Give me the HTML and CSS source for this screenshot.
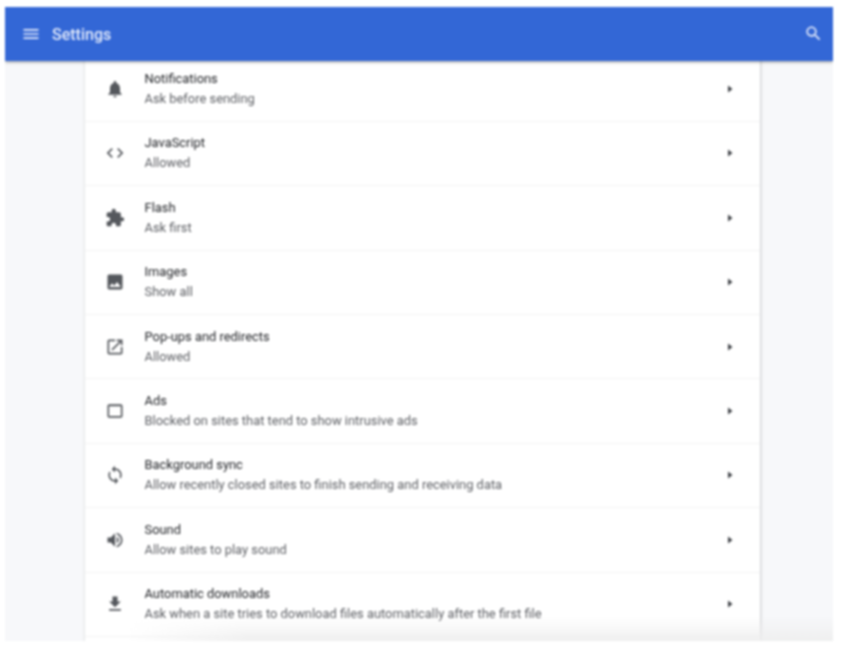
FILE: index.html
```html
<!DOCTYPE html>
<html lang="en">
<head>
    <meta charset="UTF-8">
    <meta name="viewport" content="width=device-width, initial-scale=1.0">
    <title>Settings</title>
    <link rel="stylesheet" href="styles.css">
</head>
<body>
    <div class="window">
        <header class="toolbar">
            <svg class="toolbar-icon" viewBox="0 0 24 24"><path d="M3 18h18v-2H3v2zm0-5h18v-2H3v2zm0-7v2h18V6H3z"/></svg>
            <span class="toolbar-title">Settings</span>
            <svg class="toolbar-icon search" viewBox="0 0 24 24"><path d="M15.5 14h-.79l-.28-.27C15.41 12.59 16 11.11 16 9.5 16 5.91 13.09 3 9.5 3S3 5.91 3 9.5 5.91 16 9.5 16c1.61 0 3.09-.59 4.23-1.57l.27.28v.79l5 4.99L20.49 19l-4.99-5zm-6 0C7.01 14 5 11.99 5 9.5S7.01 5 9.5 5 14 7.01 14 9.5 11.99 14 9.5 14z"/></svg>
        </header>

        <main class="card">
            <div class="row">
                <svg class="row-icon" viewBox="0 0 24 24"><path d="M12 22c1.1 0 2-.9 2-2h-4c0 1.1.89 2 2 2zm6-6v-5c0-3.07-1.64-5.64-4.5-6.32V4c0-.83-.67-1.5-1.5-1.5s-1.5.67-1.5 1.5v.68C7.63 5.36 6 7.92 6 11v5l-2 2v1h16v-1l-2-2z"/></svg>
                <div class="row-text"><div class="row-title">Notifications</div><div class="row-sub">Ask before sending</div></div>
                <svg class="row-arrow" viewBox="0 0 24 24"><path d="M8 5l9 7-9 7z"/></svg>
            </div>
            <div class="row">
                <svg class="row-icon" viewBox="0 0 24 24"><path d="M9.4 16.6L4.8 12l4.6-4.6L8 6l-6 6 6 6 1.4-1.4zm5.2 0l4.6-4.6-4.6-4.6L16 6l6 6-6 6-1.4-1.4z"/></svg>
                <div class="row-text"><div class="row-title">JavaScript</div><div class="row-sub">Allowed</div></div>
                <svg class="row-arrow" viewBox="0 0 24 24"><path d="M8 5l9 7-9 7z"/></svg>
            </div>
            <div class="row">
                <svg class="row-icon" viewBox="0 0 24 24"><path d="M20.5 11H19V7c0-1.1-.9-2-2-2h-4V3.5C13 2.12 11.88 1 10.5 1S8 2.12 8 3.5V5H4c-1.1 0-1.99.9-1.99 2v3.8H3.5c1.49 0 2.7 1.21 2.7 2.7s-1.21 2.7-2.7 2.7H2V20c0 1.1.9 2 2 2h3.8v-1.5c0-1.49 1.21-2.7 2.7-2.7 1.49 0 2.7 1.21 2.7 2.7V22H17c1.1 0 2-.9 2-2v-4h1.5c1.38 0 2.5-1.12 2.5-2.5S21.88 11 20.5 11z"/></svg>
                <div class="row-text"><div class="row-title">Flash</div><div class="row-sub">Ask first</div></div>
                <svg class="row-arrow" viewBox="0 0 24 24"><path d="M8 5l9 7-9 7z"/></svg>
            </div>
            <div class="row">
                <svg class="row-icon" viewBox="0 0 24 24"><path d="M21 19V5c0-1.1-.9-2-2-2H5c-1.1 0-2 .9-2 2v14c0 1.1.9 2 2 2h14c1.1 0 2-.9 2-2zM8.5 13.5l2.5 3.01L14.5 12l4.5 6H5l3.5-4.5z"/></svg>
                <div class="row-text"><div class="row-title">Images</div><div class="row-sub">Show all</div></div>
                <svg class="row-arrow" viewBox="0 0 24 24"><path d="M8 5l9 7-9 7z"/></svg>
            </div>
            <div class="row">
                <svg class="row-icon" viewBox="0 0 24 24"><path d="M19 19H5V5h7V3H5c-1.11 0-2 .9-2 2v14c0 1.1.89 2 2 2h14c1.1 0 2-.9 2-2v-7h-2v7zM14 3v2h3.59l-9.83 9.83 1.41 1.41L19 6.41V10h2V3h-7z"/></svg>
                <div class="row-text"><div class="row-title">Pop-ups and redirects</div><div class="row-sub">Allowed</div></div>
                <svg class="row-arrow" viewBox="0 0 24 24"><path d="M8 5l9 7-9 7z"/></svg>
            </div>
            <div class="row">
                <svg class="row-icon" viewBox="0 0 24 24"><path d="M19 4H5c-1.11 0-2 .9-2 2v12c0 1.1.89 2 2 2h14c1.1 0 2-.9 2-2V6c0-1.1-.89-2-2-2zm0 14H5V6.2h14V18z"/></svg>
                <div class="row-text"><div class="row-title">Ads</div><div class="row-sub">Blocked on sites that tend to show intrusive ads</div></div>
                <svg class="row-arrow" viewBox="0 0 24 24"><path d="M8 5l9 7-9 7z"/></svg>
            </div>
            <div class="row">
                <svg class="row-icon" viewBox="0 0 24 24"><path d="M12 4V1L8 5l4 4V6c3.31 0 6 2.69 6 6 0 1.01-.25 1.97-.7 2.8l1.46 1.46C19.54 15.03 20 13.57 20 12c0-4.42-3.58-8-8-8zm0 14c-3.31 0-6-2.69-6-6 0-1.01.25-1.97.7-2.8L5.24 7.74C4.46 8.97 4 10.43 4 12c0 4.42 3.58 8 8 8v3l4-4-4-4v3z"/></svg>
                <div class="row-text"><div class="row-title">Background sync</div><div class="row-sub">Allow recently closed sites to finish sending and receiving data</div></div>
                <svg class="row-arrow" viewBox="0 0 24 24"><path d="M8 5l9 7-9 7z"/></svg>
            </div>
            <div class="row">
                <svg class="row-icon" viewBox="0 0 24 24"><path d="M3 9v6h4l5 5V4L7 9H3zm13.5 3c0-1.77-1.02-3.29-2.5-4.03v8.05c1.48-.73 2.5-2.25 2.5-4.02zM14 3.23v2.06c2.89.86 5 3.54 5 6.71s-2.11 5.85-5 6.71v2.06c4.01-.91 7-4.49 7-8.77s-2.99-7.86-7-8.77z"/></svg>
                <div class="row-text"><div class="row-title">Sound</div><div class="row-sub">Allow sites to play sound</div></div>
                <svg class="row-arrow" viewBox="0 0 24 24"><path d="M8 5l9 7-9 7z"/></svg>
            </div>
            <div class="row">
                <svg class="row-icon" viewBox="0 0 24 24"><path d="M19 9h-4V3H9v6H5l7 7 7-7zM5 18v2h14v-2H5z"/></svg>
                <div class="row-text"><div class="row-title">Automatic downloads</div><div class="row-sub">Ask when a site tries to download files automatically after the first file</div></div>
                <svg class="row-arrow" viewBox="0 0 24 24"><path d="M8 5l9 7-9 7z"/></svg>
            </div>
        </main>

        <div class="bottom-fade"></div>
    </div>
</body>
</html>
```

FILE: styles.css
```css
html, body {
    margin: 0;
    padding: 0;
    background-color: #fff;
}
body {
    font-family: Roboto, "Liberation Sans", sans-serif;
    overflow: hidden;
    height: 648px;
}
.window {
    position: relative;
    margin: 7px 8px 0 5px;
    height: 634px;
    overflow: hidden;
    background-color: #f7f8fa;
    filter: blur(0.8px);
}
.toolbar {
    position: relative;
    z-index: 2;
    display: flex;
    align-items: center;
    height: 54px;
    padding: 0 10px 0 16px;
    background-color: #3367d6;
    box-shadow: 0 1px 3px rgba(0, 0, 0, 0.4);
    color: #e4ebfb;
}
.toolbar-icon {
    width: 20px;
    height: 20px;
    fill: #e6ecfb;
}
.toolbar-title {
    margin-left: 11px;
    font-size: 16px;
    font-weight: 500;
}
.search {
    width: 19px;
    height: 19px;
    margin-left: auto;
    margin-top: -2px;
}
.card {
    margin: -3.6px 72px 0 80px;
    padding-bottom: 20px;
    background-color: #fff;
    border-right: 1.5px solid #d5d6d9;
    box-shadow: 0 0 3px rgba(0, 0, 0, 0.15);
}
.row {
    display: flex;
    align-items: center;
    box-sizing: border-box;
    height: 64.4px;
    padding: 0 20px;
    border-bottom: 1px solid #f4f4f4;
}
.row-icon {
    flex: none;
    width: 20px;
    height: 20px;
    fill: #55585d;
}
.row-text {
    flex: 1;
    margin-left: 19.5px;
}
.row-title {
    font-size: 12.9px;
    line-height: 20px;
    color: #222428;
}
.row-sub {
    font-size: 12.9px;
    line-height: 20px;
    color: #5e6065;
}
.row-arrow {
    flex: none;
    width: 12px;
    height: 12px;
    margin-right: 4px;
    fill: #3f4247;
}
/* grey fade over the last row */
.bottom-fade {
    position: absolute;
    left: 120px;
    right: 0;
    bottom: 0;
    height: 24px;
    background: linear-gradient(to bottom, rgba(238, 238, 238, 0), rgba(238, 238, 238, 0.9));
    -webkit-mask-image: linear-gradient(to right, transparent, #000 120px);
    mask-image: linear-gradient(to right, transparent, #000 120px);
}
```
